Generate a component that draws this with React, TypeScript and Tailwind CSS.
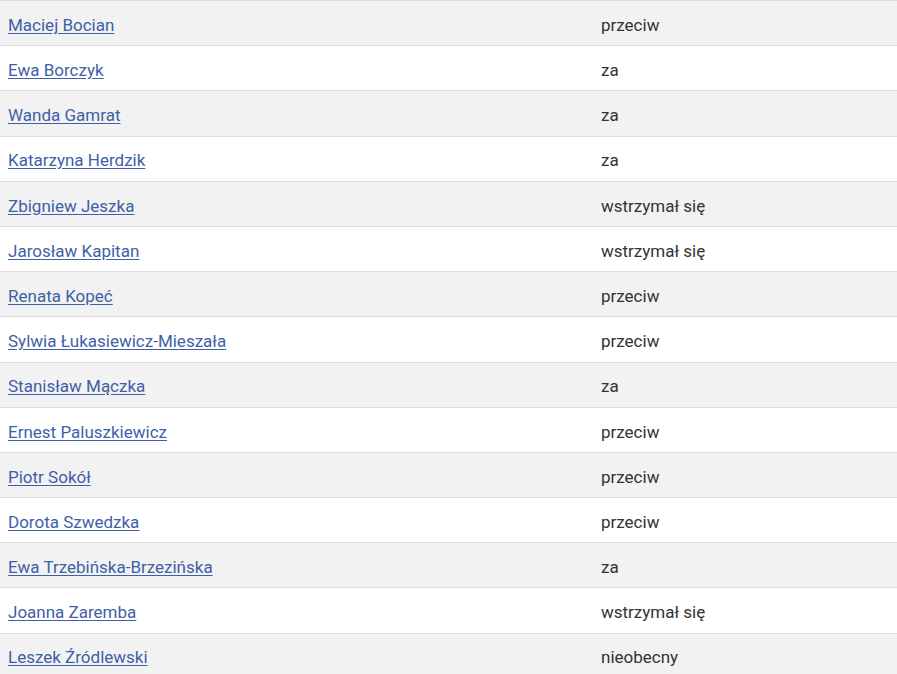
import React from "react";

const votes: [string, string][] = [
  ["Maciej Bocian", "przeciw"],
  ["Ewa Borczyk", "za"],
  ["Wanda Gamrat", "za"],
  ["Katarzyna Herdzik", "za"],
  ["Zbigniew Jeszka", "wstrzymał się"],
  ["Jarosław Kapitan", "wstrzymał się"],
  ["Renata Kopeć", "przeciw"],
  ["Sylwia Łukasiewicz-Mieszała", "przeciw"],
  ["Stanisław Mączka", "za"],
  ["Ernest Paluszkiewicz", "przeciw"],
  ["Piotr Sokół", "przeciw"],
  ["Dorota Szwedzka", "przeciw"],
  ["Ewa Trzebińska-Brzezińska", "za"],
  ["Joanna Zaremba", "wstrzymał się"],
  ["Leszek Źródlewski", "nieobecny"],
];

export default function App() {
  return (
    <div className="h-[674px] w-[897px] overflow-hidden bg-white font-['Roboto',sans-serif] text-[17px]">
      {votes.map(([name, vote], i) => (
        <div
          key={name}
          className={`grid h-[45.2px] grid-cols-[593px_1fr] items-center border-t border-[#dedede] pt-[5px] ${
            i % 2 === 0 ? "bg-[#f2f2f2]" : "bg-white"
          }`}
        >
          <div className="pl-2">
            <a href="#" className="text-[#3f5fa6] underline underline-offset-2">
              {name}
            </a>
          </div>
          <div className="pl-2 text-[#333333]">{vote}</div>
        </div>
      ))}
    </div>
  );
}
